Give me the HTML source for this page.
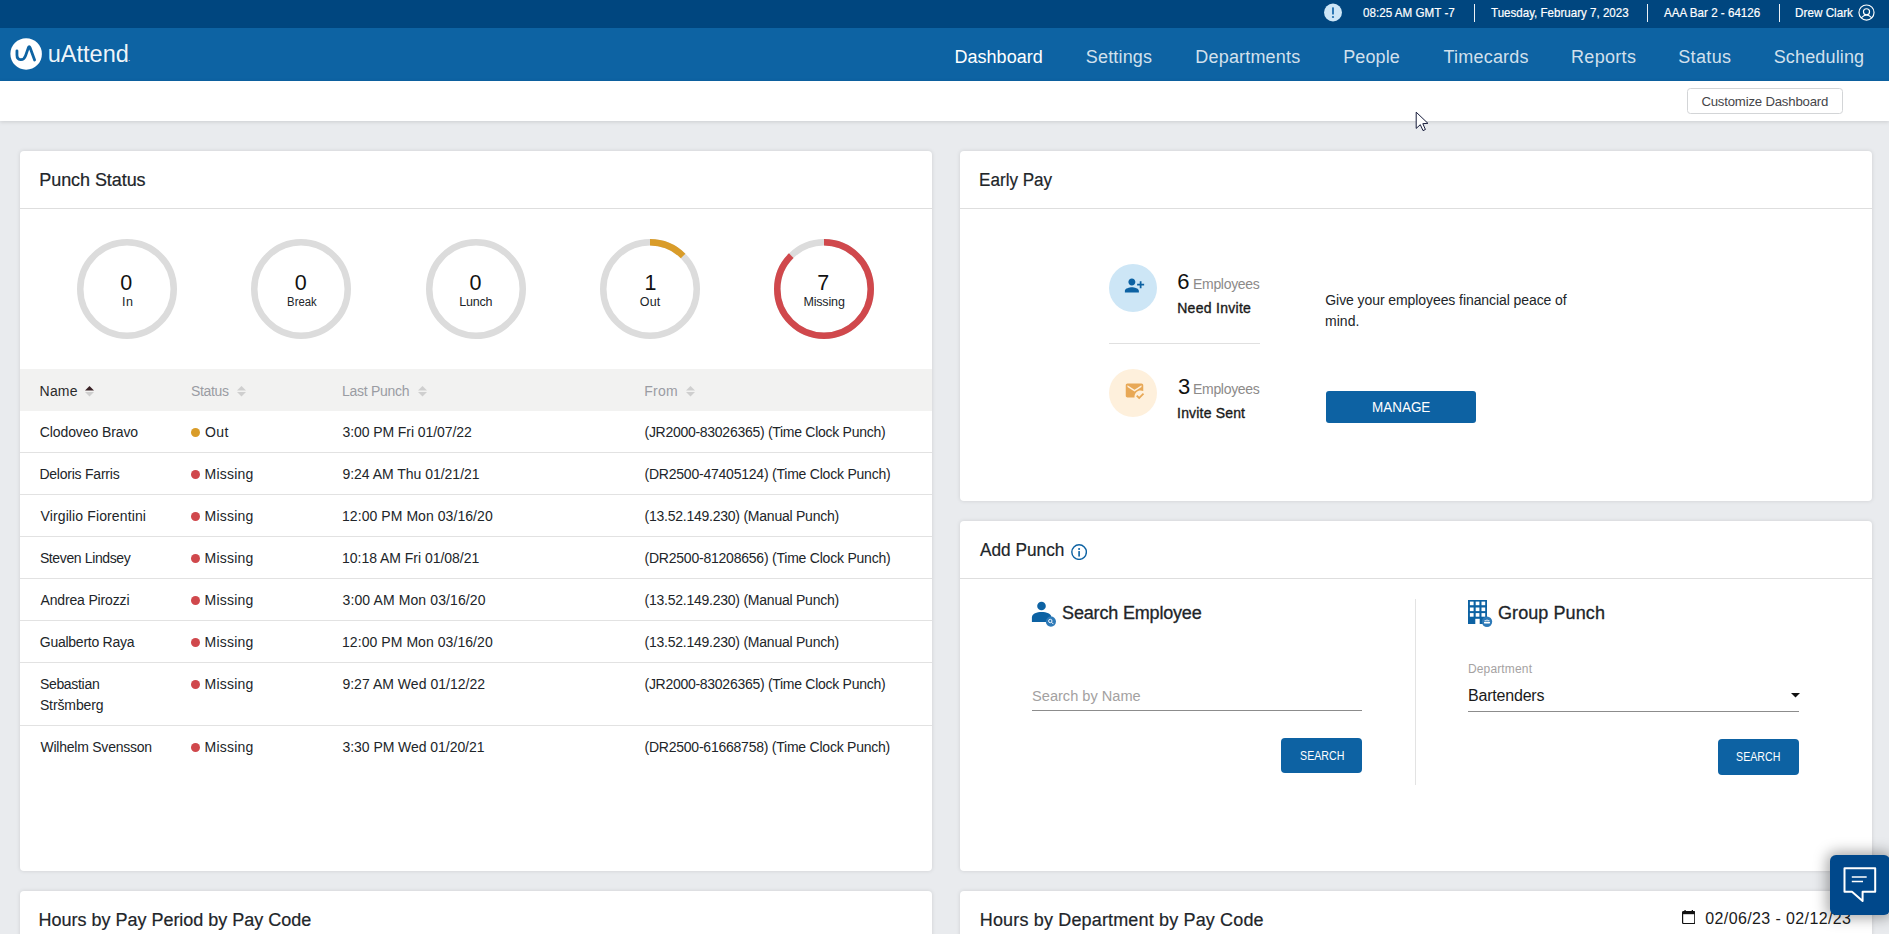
<!DOCTYPE html>
<html lang="en"><head><meta charset="utf-8"><title>uAttend Dashboard</title>
<style>
*{box-sizing:border-box;margin:0;padding:0}
html,body{width:1889px;height:934px;overflow:hidden;background:#e9ebee;font-family:"Liberation Sans", sans-serif;color:#212529}
.t{position:absolute;white-space:nowrap;display:block;font-weight:400;text-decoration:none}
.abs{position:absolute}
header.topbar{position:absolute;left:0;top:0;width:1889px;height:28px;background:#00467f}
nav.mainnav{position:absolute;left:0;top:28px;width:1889px;height:53px;background:#0d63a3}
.subbar{position:absolute;left:0;top:81px;width:1889px;height:40px;background:#fff;box-shadow:0 1px 4px rgba(0,0,0,.13)}
.sep{position:absolute;top:4px;width:1px;height:18px;background:rgba(255,255,255,.92)}
.card{position:absolute;background:#fff;border-radius:4px;box-shadow:0 0 4px rgba(0,0,0,.12)}
.card .hd{position:absolute;left:0;top:0;right:0;height:58px;border-bottom:1px solid #dedede}
.btn{position:absolute;background:#0d62a3;border-radius:4px;border:0;padding:0;font-family:inherit;overflow:visible}
.cbtn{position:absolute;left:1687px;top:7px;width:156px;height:26px;border:1px solid #d3d5d7;border-radius:3.5px;background:#fff;padding:0;font-family:inherit}
.row{position:absolute;left:0;width:912px;border-bottom:1px solid #e2e2e2}
.thead{position:absolute;left:0;top:218px;width:912px;height:42px;background:#f2f2f1}
.dot{position:absolute;width:9px;height:9px;border-radius:50%}
.uline{position:absolute;height:1px;background:#8c8c8c}
</style></head>
<body>
<header class="topbar"><svg class="abs" style="left:1324px;top:3.4px" width="18" height="19" viewBox="0 0 18 19"><circle cx="9" cy="9.5" r="9" fill="#cde6f7"/><rect x="8.1" y="4.3" width="1.8" height="7.2" rx=".6" fill="#1c6cad"/><circle cx="9" cy="14" r="1.1" fill="#1c6cad"/></svg><span class="t" style="left:1362.50px;top:6px;font-size:13px;line-height:13px;transform:scaleX(0.8965);transform-origin:0.5px 0;color:#ffffff;-webkit-text-stroke:0.2px currentColor;">08:25 AM GMT -7</span><i class="sep" style="left:1474px"></i><span class="t" style="left:1490.80px;top:6px;font-size:13px;line-height:13px;transform:scaleX(0.8901);transform-origin:0.2px 0;color:#ffffff;-webkit-text-stroke:0.2px currentColor;">Tuesday, February 7, 2023</span><i class="sep" style="left:1647px"></i><span class="t" style="left:1663.80px;top:6px;font-size:13px;line-height:13px;transform:scaleX(0.8937);transform-origin:0.0px 0;color:#ffffff;-webkit-text-stroke:0.2px currentColor;">AAA Bar 2 - 64126</span><i class="sep" style="left:1779px"></i><span class="t" style="left:1794.80px;top:6px;font-size:13px;line-height:13px;transform:scaleX(0.8993);transform-origin:1.0px 0;color:#ffffff;-webkit-text-stroke:0.2px currentColor;">Drew Clark</span><svg class="abs" style="left:1857.5px;top:3.5px" width="17" height="17" viewBox="0 0 17 17" fill="none" stroke="#fff" stroke-width="1.15"><circle cx="8.5" cy="8.5" r="7.55"/><circle cx="8.5" cy="7.8" r="3.05"/><path d="M3.2 13.9 Q8.5 8.2 13.8 13.9"/></svg></header>
<nav class="mainnav"><svg class="abs" style="left:10px;top:10px" width="32" height="32" viewBox="0 0 32 32"><circle cx="16.15" cy="15.9" r="15.75" fill="#fff"/><path d="M6.95 12.8 V17 C6.95 22.8 13.6 23.4 15.6 17.6 L18.4 9.6 Q19.2 7.6 20 9.6 L24.6 22" fill="none" stroke="#0d63a3" stroke-width="2.8" stroke-linecap="round" stroke-linejoin="round"/></svg><span class="t logo" style="left:47.80px;top:15px;font-size:23.5px;line-height:23.5px;letter-spacing:-0.007px;color:rgba(255,255,255,.94);">uAttend</span><span class="t" style="left:127.90px;top:27px;font-size:8px;line-height:8px;color:#ffffff;">.</span><a class="t" style="left:954.40px;top:20px;font-size:18px;line-height:18px;letter-spacing:0.044px;color:#ffffff;">Dashboard</a><a class="t" style="left:1085.80px;top:20px;font-size:18px;line-height:18px;letter-spacing:0.166px;color:rgba(255,255,255,.82);">Settings</a><a class="t" style="left:1195.30px;top:20px;font-size:18px;line-height:18px;letter-spacing:0.186px;color:rgba(255,255,255,.82);">Departments</a><a class="t" style="left:1343.20px;top:20px;font-size:18px;line-height:18px;letter-spacing:0.113px;color:rgba(255,255,255,.82);">People</a><a class="t" style="left:1443.40px;top:20px;font-size:18px;line-height:18px;letter-spacing:0.232px;color:rgba(255,255,255,.82);">Timecards</a><a class="t" style="left:1571.00px;top:20px;font-size:18px;line-height:18px;letter-spacing:0.312px;color:rgba(255,255,255,.82);">Reports</a><a class="t" style="left:1678.20px;top:20px;font-size:18px;line-height:18px;letter-spacing:0.374px;color:rgba(255,255,255,.82);">Status</a><a class="t" style="left:1773.70px;top:20px;font-size:18px;line-height:18px;letter-spacing:0.149px;color:rgba(255,255,255,.82);">Scheduling</a></nav>
<div class="subbar"><button class="cbtn"><span class="t" style="left:13.40px;top:6px;font-size:13.2px;line-height:13.2px;letter-spacing:-0.197px;color:#454549;">Customize Dashboard</span></button></div>
<main>
<section class="card" style="left:20px;top:151px;width:912px;height:720px"><div class="hd"></div><h2 class="t" style="left:19.30px;top:20px;font-size:18px;line-height:18px;letter-spacing:-0.070px;color:#212529;-webkit-text-stroke:0.2px currentColor;">Punch Status</h2><svg class="abs" style="left:57.2px;top:88px" width="100" height="100" viewBox="0 0 100 100"><circle cx="50" cy="50" r="46.75" fill="none" stroke="#dcdcdc" stroke-width="6.5"/></svg><span class="t" style="left:100.30px;top:122px;font-size:21.5px;line-height:21.5px;color:#111;">0</span><span class="t" style="left:102.00px;top:145px;font-size:12.5px;line-height:12.5px;letter-spacing:0.427px;color:#212529;">In</span><svg class="abs" style="left:231.3px;top:88px" width="100" height="100" viewBox="0 0 100 100"><circle cx="50" cy="50" r="46.75" fill="none" stroke="#dcdcdc" stroke-width="6.5"/></svg><span class="t" style="left:274.70px;top:122px;font-size:21.5px;line-height:21.5px;color:#111;">0</span><span class="t" style="left:266.50px;top:145px;font-size:12.5px;line-height:12.5px;transform:scaleX(0.9053);transform-origin:1.0px 0;color:#212529;">Break</span><svg class="abs" style="left:406px;top:88px" width="100" height="100" viewBox="0 0 100 100"><circle cx="50" cy="50" r="46.75" fill="none" stroke="#dcdcdc" stroke-width="6.5"/></svg><span class="t" style="left:449.50px;top:122px;font-size:21.5px;line-height:21.5px;color:#111;">0</span><span class="t" style="left:439.30px;top:145px;font-size:12.5px;line-height:12.5px;letter-spacing:-0.226px;color:#212529;">Lunch</span><svg class="abs" style="left:580px;top:88px" width="100" height="100" viewBox="0 0 100 100"><circle cx="50" cy="50" r="46.75" fill="none" stroke="#dcdcdc" stroke-width="6.5"/><circle cx="50" cy="50" r="46.75" fill="none" stroke="#d99c29" stroke-width="6.5" stroke-dasharray="36.72 293.74" transform="rotate(-90 50 50)"/></svg><span class="t" style="left:624.50px;top:122px;font-size:21.5px;line-height:21.5px;color:#111;">1</span><span class="t" style="left:619.80px;top:145px;font-size:12.5px;line-height:12.5px;letter-spacing:0.113px;color:#212529;">Out</span><svg class="abs" style="left:754px;top:88px" width="100" height="100" viewBox="0 0 100 100"><circle cx="50" cy="50" r="46.75" fill="none" stroke="#dcdcdc" stroke-width="6.5"/><circle cx="50" cy="50" r="46.75" fill="none" stroke="#d0484c" stroke-width="6.5" stroke-dasharray="257.02 293.74" transform="rotate(-90 50 50)"/></svg><span class="t" style="left:797.30px;top:122px;font-size:21.5px;line-height:21.5px;color:#111;">7</span><span class="t" style="left:783.40px;top:145px;font-size:12.5px;line-height:12.5px;letter-spacing:-0.153px;color:#212529;">Missing</span><div class="thead"><span class="t" style="left:19.60px;top:15px;font-size:14px;line-height:14px;letter-spacing:0.180px;color:#2b2b2b;">Name</span><svg class="abs" style="left:65.3px;top:16.7px" width="9" height="11" viewBox="0 0 9 11"><path d="M0 4.6 L4.5 0 L9 4.6 Z" fill="#3a2226"/><path d="M0 6 L9 6 L4.5 10.6 Z" fill="#cfcfcf"/></svg><span class="t" style="left:171.10px;top:15px;font-size:14px;line-height:14px;letter-spacing:-0.358px;color:#9a9ca3;">Status</span><svg class="abs" style="left:217.2px;top:16.6px" width="9" height="11" viewBox="0 0 9 11"><path d="M0 4.6 L4.5 0 L9 4.6 Z" fill="#cfcfcf"/><path d="M0 6 L9 6 L4.5 10.6 Z" fill="#cfcfcf"/></svg><span class="t" style="left:321.90px;top:15px;font-size:14px;line-height:14px;letter-spacing:-0.262px;color:#9a9ca3;">Last Punch</span><svg class="abs" style="left:397.6px;top:16.6px" width="9" height="11" viewBox="0 0 9 11"><path d="M0 4.6 L4.5 0 L9 4.6 Z" fill="#cfcfcf"/><path d="M0 6 L9 6 L4.5 10.6 Z" fill="#cfcfcf"/></svg><span class="t" style="left:624.20px;top:15px;font-size:14px;line-height:14px;letter-spacing:0.267px;color:#9a9ca3;">From</span><svg class="abs" style="left:665.8px;top:16.6px" width="9" height="11" viewBox="0 0 9 11"><path d="M0 4.6 L4.5 0 L9 4.6 Z" fill="#cfcfcf"/><path d="M0 6 L9 6 L4.5 10.6 Z" fill="#cfcfcf"/></svg></div><div class="row" style="top:260px;height:42px;"><span class="t" style="left:19.80px;top:14px;font-size:14px;line-height:14px;letter-spacing:-0.102px;color:#212529;">Clodoveo Bravo</span><i class="dot" style="left:171px;top:17px;background:#d99c29"></i><span class="t" style="left:185.00px;top:14px;font-size:14px;line-height:14px;letter-spacing:0.412px;color:#212529;">Out</span><span class="t" style="left:322.50px;top:14px;font-size:14px;line-height:14px;letter-spacing:-0.082px;color:#212529;">3:00 PM Fri 01/07/22</span><span class="t" style="left:624.50px;top:14px;font-size:14px;line-height:14px;letter-spacing:-0.279px;color:#212529;">(JR2000-83026365) (Time Clock Punch)</span></div><div class="row" style="top:302px;height:42px;"><span class="t" style="left:19.40px;top:14px;font-size:14px;line-height:14px;letter-spacing:-0.225px;color:#212529;">Deloris Farris</span><i class="dot" style="left:171px;top:17px;background:#d0484c"></i><span class="t" style="left:184.50px;top:14px;font-size:14px;line-height:14px;letter-spacing:0.239px;color:#212529;">Missing</span><span class="t" style="left:322.40px;top:14px;font-size:14px;line-height:14px;letter-spacing:-0.018px;color:#212529;">9:24 AM Thu 01/21/21</span><span class="t" style="left:624.50px;top:14px;font-size:14px;line-height:14px;letter-spacing:-0.222px;color:#212529;">(DR2500-47405124) (Time Clock Punch)</span></div><div class="row" style="top:344px;height:42px;"><span class="t" style="left:20.50px;top:14px;font-size:14px;line-height:14px;letter-spacing:0.121px;color:#212529;">Virgilio Fiorentini</span><i class="dot" style="left:171px;top:17px;background:#d0484c"></i><span class="t" style="left:184.50px;top:14px;font-size:14px;line-height:14px;letter-spacing:0.239px;color:#212529;">Missing</span><span class="t" style="left:322.00px;top:14px;font-size:14px;line-height:14px;letter-spacing:0.063px;color:#212529;">12:00 PM Mon 03/16/20</span><span class="t" style="left:624.50px;top:14px;font-size:14px;line-height:14px;letter-spacing:-0.238px;color:#212529;">(13.52.149.230) (Manual Punch)</span></div><div class="row" style="top:386px;height:42px;"><span class="t" style="left:19.90px;top:14px;font-size:14px;line-height:14px;letter-spacing:-0.372px;color:#212529;">Steven Lindsey</span><i class="dot" style="left:171px;top:17px;background:#d0484c"></i><span class="t" style="left:184.50px;top:14px;font-size:14px;line-height:14px;letter-spacing:0.239px;color:#212529;">Missing</span><span class="t" style="left:322.00px;top:14px;font-size:14px;line-height:14px;letter-spacing:-0.027px;color:#212529;">10:18 AM Fri 01/08/21</span><span class="t" style="left:624.50px;top:14px;font-size:14px;line-height:14px;letter-spacing:-0.222px;color:#212529;">(DR2500-81208656) (Time Clock Punch)</span></div><div class="row" style="top:428px;height:42px;"><span class="t" style="left:20.50px;top:14px;font-size:14px;line-height:14px;letter-spacing:-0.156px;color:#212529;">Andrea Pirozzi</span><i class="dot" style="left:171px;top:17px;background:#d0484c"></i><span class="t" style="left:184.50px;top:14px;font-size:14px;line-height:14px;letter-spacing:0.239px;color:#212529;">Missing</span><span class="t" style="left:322.50px;top:14px;font-size:14px;line-height:14px;letter-spacing:0.113px;color:#212529;">3:00 AM Mon 03/16/20</span><span class="t" style="left:624.50px;top:14px;font-size:14px;line-height:14px;letter-spacing:-0.238px;color:#212529;">(13.52.149.230) (Manual Punch)</span></div><div class="row" style="top:470px;height:42px;"><span class="t" style="left:19.80px;top:14px;font-size:14px;line-height:14px;letter-spacing:-0.259px;color:#212529;">Gualberto Raya</span><i class="dot" style="left:171px;top:17px;background:#d0484c"></i><span class="t" style="left:184.50px;top:14px;font-size:14px;line-height:14px;letter-spacing:0.239px;color:#212529;">Missing</span><span class="t" style="left:322.00px;top:14px;font-size:14px;line-height:14px;letter-spacing:0.063px;color:#212529;">12:00 PM Mon 03/16/20</span><span class="t" style="left:624.50px;top:14px;font-size:14px;line-height:14px;letter-spacing:-0.238px;color:#212529;">(13.52.149.230) (Manual Punch)</span></div><div class="row" style="top:512px;height:63px;"><span class="t" style="left:19.90px;top:14px;font-size:14px;line-height:14px;letter-spacing:-0.310px;color:#212529;">Sebastian</span><span class="t" style="left:19.90px;top:35px;font-size:14px;line-height:14px;letter-spacing:-0.111px;color:#212529;">Stršmberg</span><i class="dot" style="left:171px;top:17px;background:#d0484c"></i><span class="t" style="left:184.50px;top:14px;font-size:14px;line-height:14px;letter-spacing:0.239px;color:#212529;">Missing</span><span class="t" style="left:322.40px;top:14px;font-size:14px;line-height:14px;letter-spacing:0.028px;color:#212529;">9:27 AM Wed 01/12/22</span><span class="t" style="left:624.50px;top:14px;font-size:14px;line-height:14px;letter-spacing:-0.279px;color:#212529;">(JR2000-83026365) (Time Clock Punch)</span></div><div class="row" style="top:575px;height:42px;border-bottom:0;"><span class="t" style="left:20.50px;top:14px;font-size:14px;line-height:14px;letter-spacing:-0.238px;color:#212529;">Wilhelm Svensson</span><i class="dot" style="left:171px;top:17px;background:#d0484c"></i><span class="t" style="left:184.50px;top:14px;font-size:14px;line-height:14px;letter-spacing:0.239px;color:#212529;">Missing</span><span class="t" style="left:322.50px;top:14px;font-size:14px;line-height:14px;letter-spacing:-0.051px;color:#212529;">3:30 PM Wed 01/20/21</span><span class="t" style="left:624.50px;top:14px;font-size:14px;line-height:14px;letter-spacing:-0.233px;color:#212529;">(DR2500-61668758) (Time Clock Punch)</span></div></section>
<section class="card" style="left:960px;top:151px;width:912px;height:350px"><div class="hd"></div><h2 class="t" style="left:19.40px;top:20px;font-size:18px;line-height:18px;transform:scaleX(0.9481);transform-origin:1.4px 0;color:#212529;-webkit-text-stroke:0.2px currentColor;">Early Pay</h2><div class="abs" style="left:149px;top:113px;width:48px;height:48px;border-radius:50%;background:#cde6f6"></div><svg class="abs" style="left:164.20000000000005px;top:124.10000000000002px" width="21" height="21" viewBox="0 0 24 24" fill="#0d62a3"><path d="M13 8c0-2.21-1.79-4-4-4S5 5.79 5 8s1.790 4 4 4 4-1.790 4-4zm2 2v2h3v3h2v-3h3v-2h-3V7h-2v3h-3zM1 18v2h16v-2c0-2.66-5.330-4-8-4s-8 1.340-8 4z"/></svg><span class="t" style="left:217.20px;top:120px;font-size:22px;line-height:22px;color:#111;">6</span><span class="t" style="left:233.00px;top:126px;font-size:14px;line-height:14px;letter-spacing:-0.307px;color:#8c8a89;">Employees</span><span class="t" style="left:217.20px;top:150px;font-size:14px;line-height:14px;letter-spacing:0.287px;color:#1a1a1a;-webkit-text-stroke:0.35px currentColor;">Need Invite</span><div class="abs" style="left:149px;top:192px;width:151px;height:1px;background:#e0e0e0"></div><div class="abs" style="left:149px;top:218px;width:48px;height:48px;border-radius:50%;background:#fef0dc"></div><svg class="abs" style="left:164.20000000000005px;top:229.2px" width="21" height="21" viewBox="0 0 24 24" fill="#e8a856"><path d="M12 19c0-3.870 3.130-7 7-7 1.080 0 2.090.250 3 .680V6c0-1.100-.9-2-2-2H4c-1.100 0-2 .9-2 2v12c0 1.100.9 2 2 2h8.080c-.050-.330-.080-.660-.080-1zM4 6l8 5 8-5v2l-8 5-8-5V6zm13.340 16l-3.540-3.540 1.410-1.410 2.120 2.120 4.240-4.240L23 16.340 17.340 22z"/></svg><span class="t" style="left:218.00px;top:225px;font-size:22px;line-height:22px;color:#111;">3</span><span class="t" style="left:233.00px;top:231px;font-size:14px;line-height:14px;letter-spacing:-0.307px;color:#8c8a89;">Employees</span><span class="t" style="left:217.10px;top:255px;font-size:14px;line-height:14px;letter-spacing:0.174px;color:#1a1a1a;-webkit-text-stroke:0.35px currentColor;">Invite Sent</span><p class="t" style="left:365.30px;top:142px;font-size:14px;line-height:14px;letter-spacing:-0.080px;color:#212529;">Give your employees financial peace of</p><p class="t" style="left:365.10px;top:163px;font-size:14px;line-height:14px;color:#212529;">mind.</p><button class="btn" style="left:366px;top:240px;width:150px;height:32px;border-radius:3px"><span class="t" style="left:45.60px;top:9px;font-size:14px;line-height:14px;transform:scaleX(0.9604);transform-origin:1.1px 0;color:#ffffff;">MANAGE</span></button></section>
<section class="card" style="left:960px;top:521px;width:912px;height:350px"><div class="hd"></div><h2 class="t" style="left:20.00px;top:20px;font-size:18px;line-height:18px;transform:scaleX(0.9580);transform-origin:0.0px 0;color:#212529;-webkit-text-stroke:0.2px currentColor;">Add Punch</h2><svg class="abs" style="left:110.79999999999995px;top:22.799999999999955px" width="16.2" height="16.2" viewBox="0 0 16 16"><circle cx="8" cy="8" r="7.2" fill="none" stroke="#0d62a3" stroke-width="1.4"/><circle cx="8" cy="4.9" r="1" fill="#0d62a3"/><rect x="7.2" y="7" width="1.6" height="5.4" fill="#0d62a3"/></svg><svg class="abs" style="left:70px;top:79px" width="28" height="28" viewBox="0 0 28 28"><circle cx="11.5" cy="6" r="4.3" fill="#0d62a3"/><path d="M1.9 22 V17.4 C1.9 13.6 7 12 11.6 12 C16.4 12 21.4 13.6 21.4 17.4 V22 Z" fill="#0d62a3"/><circle cx="20.9" cy="21.6" r="5.1" fill="#2e7ab8"/><circle cx="20.3" cy="21" r="1.7" fill="none" stroke="#fff" stroke-width=".9"/><path d="M21.6 22.3 L23.4 24.1" stroke="#fff" stroke-width="1"/></svg><h3 class="t" style="left:102.10px;top:83px;font-size:18px;line-height:18px;letter-spacing:-0.176px;color:#212529;-webkit-text-stroke:0.3px currentColor;">Search Employee</h3><span class="t" style="left:71.90px;top:167px;font-size:15.5px;line-height:15.5px;transform:scaleX(0.9411);transform-origin:0.7px 0;color:#a3a1a1;">Search by Name</span><div class="uline" style="left:72px;top:189px;width:330px"></div><button class="btn" style="left:321px;top:217px;width:81px;height:35px"><span class="t" style="left:18.60px;top:12px;font-size:12.5px;line-height:12.5px;transform:scaleX(0.8507);transform-origin:0.5px 0;color:#ffffff;">SEARCH</span></button><div class="abs" style="left:455px;top:78px;width:1px;height:186px;background:#e3e3e3"></div><svg class="abs" style="left:507.9000000000001px;top:79px" width="25" height="28" viewBox="0 0 25 28"><rect x="0" y="0" width="19" height="24" fill="#0d62a3"/><rect x="1.9" y="1.6" width="3.7" height="3.6" fill="#fff"/><rect x="1.9" y="7.5" width="3.7" height="3.6" fill="#fff"/><rect x="1.9" y="13.1" width="3.7" height="3.6" fill="#fff"/><rect x="7.7" y="1.6" width="3.7" height="3.6" fill="#fff"/><rect x="7.7" y="7.5" width="3.7" height="3.6" fill="#fff"/><rect x="7.7" y="13.1" width="3.7" height="3.6" fill="#fff"/><rect x="13.5" y="1.6" width="3.7" height="3.6" fill="#fff"/><rect x="13.5" y="7.5" width="3.7" height="3.6" fill="#fff"/><rect x="13.5" y="13.1" width="3.7" height="3.6" fill="#fff"/><rect x="7.3" y="18.8" width="4.4" height="5.2" fill="#fff"/><circle cx="19" cy="21.8" r="5.2" fill="#2e7ab8"/><circle cx="17.2" cy="20.6" r=".7" fill="#fff"/><circle cx="19" cy="20.3" r=".8" fill="#fff"/><circle cx="20.8" cy="20.6" r=".7" fill="#fff"/><rect x="16" y="21.7" width="6" height="1.7" rx=".6" fill="#fff"/></svg><h3 class="t" style="left:538.00px;top:83px;font-size:18px;line-height:18px;letter-spacing:0.084px;color:#212529;-webkit-text-stroke:0.3px currentColor;">Group Punch</h3><label class="t" style="left:507.90px;top:142px;font-size:12px;line-height:12px;letter-spacing:0.160px;color:#a5a2a2;">Department</label><span class="t" style="left:508.00px;top:167px;font-size:16px;line-height:16px;letter-spacing:-0.196px;color:#1a1a1a;">Bartenders</span><svg class="abs" style="left:830.5999999999999px;top:172.20000000000005px" width="9" height="5" viewBox="0 0 9 5"><path d="M0 0 H9 L4.5 4.6 Z" fill="#111"/></svg><div class="uline" style="left:508px;top:190px;width:331px"></div><button class="btn" style="left:758px;top:218px;width:81px;height:36px"><span class="t" style="left:18.40px;top:12px;font-size:12.5px;line-height:12.5px;transform:scaleX(0.8507);transform-origin:0.5px 0;color:#ffffff;">SEARCH</span></button></section>
<section class="card" style="left:20px;top:891px;width:912px;height:80px"><h2 class="t" style="left:18.60px;top:20px;font-size:18px;line-height:18px;letter-spacing:-0.018px;color:#212529;-webkit-text-stroke:0.2px currentColor;">Hours by Pay Period by Pay Code</h2></section>
<section class="card" style="left:960px;top:891px;width:912px;height:80px"><h2 class="t" style="left:19.80px;top:20px;font-size:18px;line-height:18px;letter-spacing:0.156px;color:#212529;-webkit-text-stroke:0.2px currentColor;">Hours by Department by Pay Code</h2><svg class="abs" style="left:721.5999999999999px;top:18.600000000000023px" width="13.4" height="14.2" viewBox="0 0 13.4 14.2"><rect x=".6" y="1.6" width="12.2" height="12" rx="1" fill="none" stroke="#111" stroke-width="1.2"/><rect x=".6" y="1.2" width="12.2" height="3" fill="#111"/><rect x="2.4" y="0" width="1.3" height="2" fill="#111"/><rect x="9.7" y="0" width="1.3" height="2" fill="#111"/></svg><span class="t" style="left:745.30px;top:20px;font-size:16px;line-height:16px;letter-spacing:0.384px;color:#1a1a1a;">02/06/23 - 02/12/23</span></section>
</main>
<div class="abs" style="left:1830px;top:855px;width:60px;height:60px;border-radius:6px;background:#00488b;box-shadow:0 0 14px 3px rgba(0,0,0,.35)"><svg class="abs" style="left:0;top:0" width="60" height="60" viewBox="0 0 60 60" fill="none" stroke="#fff"><path d="M14.5 13.2 H45.2 V36.8 H32.6 V46 L22 36.8 H14.5 Z" stroke-width="2" stroke-linejoin="round"/><path d="M21.8 21.9 H36.7 M21.8 26.5 H33" stroke-width="1.5"/></svg></div>
<svg class="abs" style="left:1415px;top:111px" width="15" height="22" viewBox="0 0 15 22"><path d="M1.2 1.2 V17.4 L5.3 13.7 L8 19.6 L10.4 18.5 L7.8 12.7 L12.9 12.3 Z" fill="#fff" stroke="#0b1030" stroke-width=".95" stroke-linejoin="miter"/></svg>
</body></html>
